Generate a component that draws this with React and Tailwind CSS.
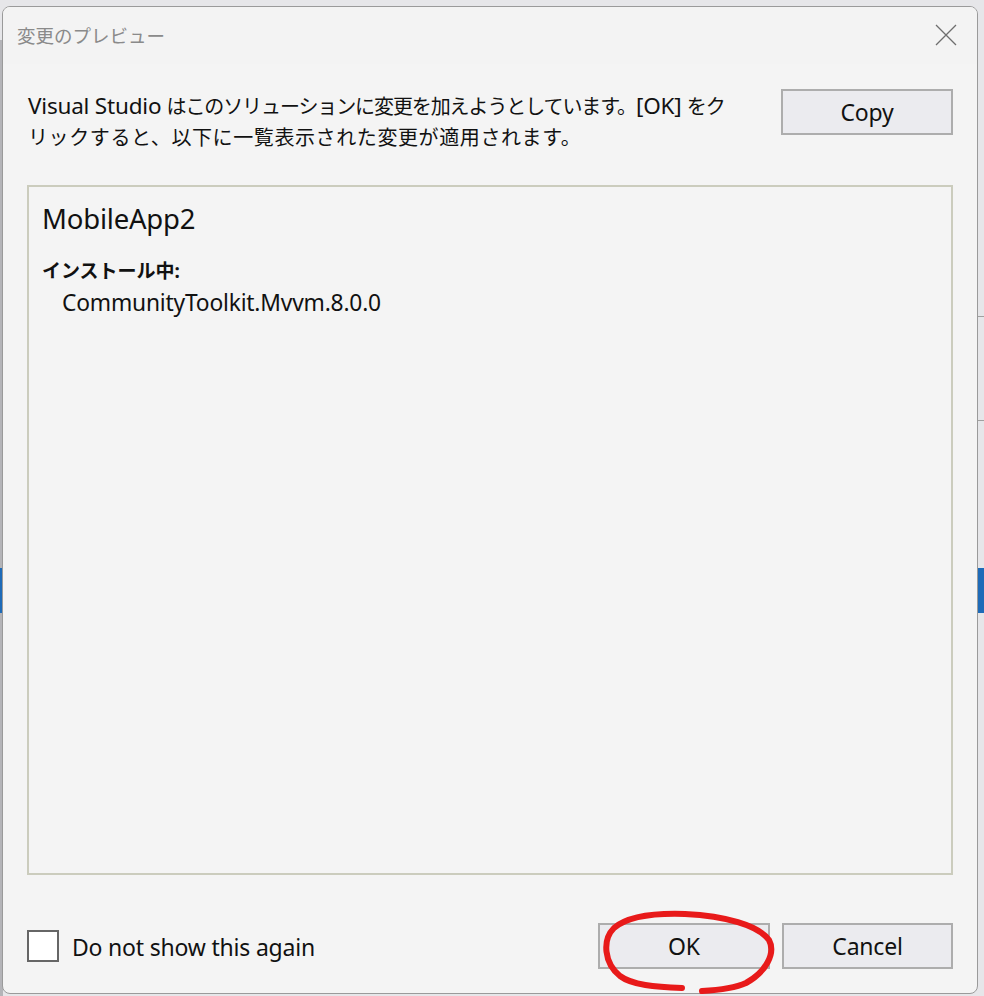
import React from "react";

const font = { fontFamily: '"Noto Sans", "Noto Sans CJK JP", sans-serif' };

function Btn({ children, className = "" }) {
  return (
    <div
      className={
        "flex items-center justify-center border-2 border-[#adadad] bg-[#ebebef] text-[23px] text-[#111111] tracking-[-0.2px] " +
        className
      }
    >
      {children}
    </div>
  );
}

const L = ({ children }) => <span className="text-[22.5px] tracking-[-0.2px]">{children}</span>;

export default function App() {
  return (
    <div
      className="relative w-[984px] h-[996px] overflow-hidden bg-[#e6e6e9]"
      style={font}
    >
      {/* background window fragments */}
      <div className="absolute left-0 top-[40px] w-[3px] h-[956px] bg-[#b4b4b8]" />
      <div className="absolute left-0 top-[568px] w-[3px] h-[45px] bg-[#1e6bb8]" />
      <div className="absolute right-0 top-[568px] w-[7px] h-[45px] bg-[#1e6bb8]" />
      <div className="absolute right-0 top-[316px] w-[7px] h-[1px] bg-[#a0a0a0]" />
      <div className="absolute right-0 top-[420px] w-[7px] h-[1px] bg-[#a0a0a0]" />

      <div className="pt-[6px] pl-[2px]">
        <div className="relative flex flex-col w-[976px] h-[988px] rounded-[8px] border border-[#9a9a9a] bg-[#f4f4f4] overflow-hidden">
          {/* title bar */}
          <div className="flex items-center justify-between h-[57px] pl-[14px] pr-[20px] bg-[#f3f3f3] shrink-0">
            <div className="text-[18.5px] text-[#8a8a8a] pt-[1px]">変更のプレビュー</div>
            <svg width="22" height="22" viewBox="0 0 22 22" className="mb-[2px]">
              <path d="M1 1 L21 21 M21 1 L1 21" stroke="#6e6e6e" strokeWidth="1.3" fill="none" />
            </svg>
          </div>

          {/* body */}
          <div className="flex flex-col flex-1 px-[24px]">
            <div className="flex justify-between items-start pt-[23px]">
              <div className="text-[20px] leading-[31px] text-[#111111] pl-[1px] pt-[3px]">
                <div className="whitespace-nowrap">
                  <L>Visual Studio</L>{" "}
                  <span className="tracking-[-1.1px]">はこのソリューションに変更を加えようとしています。</span>
                  <L>[OK]</L> <span className="tracking-[-1.1px]">をク</span>
                </div>
                <div className="whitespace-nowrap tracking-[0.6px]">
                  リックすると、以下に一覧表示された変更が適用されます。
                </div>
              </div>
              <Btn className="w-[172px] h-[46px] mt-[2px]">Copy</Btn>
            </div>

            <div className="mt-[32px] h-[690px] border-2 border-[#cbccbd] bg-[#f4f4f4] px-[13px] pt-[14px]">
              <div className="text-[27.5px] leading-[36px] text-[#111111] tracking-[-0.2px]">MobileApp2</div>
              <div className="mt-[20px] text-[19px] leading-[28px] font-bold text-[#111111]">
                インストール中:
              </div>
              <div className="mt-[2px] pl-[20px] text-[22.8px] leading-[32px] text-[#111111] tracking-[-0.2px]">
                CommunityToolkit.Mvvm.8.0.0
              </div>
            </div>

            <div className="flex items-center mt-[48px]">
              <div className="w-[32px] h-[32px] border-2 border-[#666666] bg-white" />
              <div className="ml-[13px] text-[23px] text-[#111111] tracking-[-0.2px] pt-[3px]">
                Do not show this again
              </div>
              <div className="flex-1" />
              <Btn className="w-[172px] h-[46px] mr-[12px]">OK</Btn>
              <Btn className="w-[171px] h-[46px]">Cancel</Btn>
            </div>
          </div>
        </div>
      </div>

      {/* red annotation */}
      <svg
        className="absolute left-0 top-0 pointer-events-none"
        width="984"
        height="996"
        viewBox="0 0 984 996"
      >
        <path
          d="M682 988 C655 987 632 985 620 976 C604 963 602 940 614 928 C628 916 655 913 685 914 C725 916 758 925 769 940 C776 953 766 972 746 983 C735 988 720 990 702 991"
          stroke="#e81a1a"
          strokeWidth="6"
          strokeLinecap="round"
          fill="none"
        />
      </svg>
    </div>
  );
}
